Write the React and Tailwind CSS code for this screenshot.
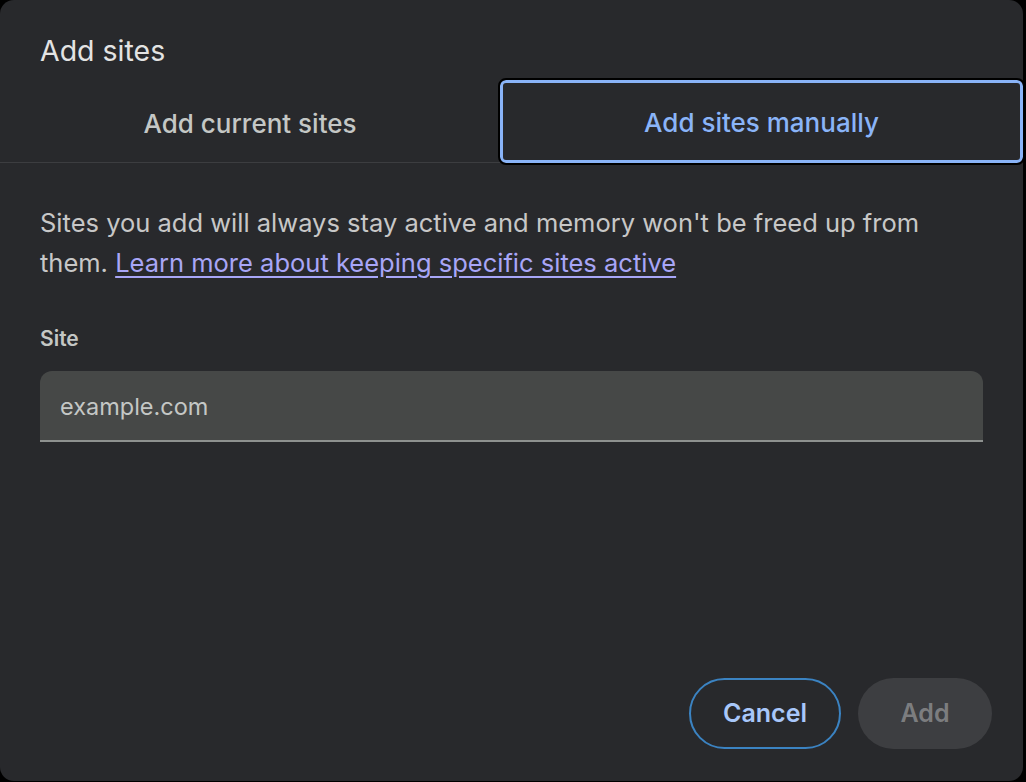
export default function App() {
  return (
    <div className="h-[782px] w-[1026px] overflow-hidden bg-black" style={{ fontFamily: "Inter, Roboto, 'Noto Sans', sans-serif" }}>
      <div className="flex h-[781px] w-[1023px] flex-col rounded-[14px] bg-[#28292c]">
        <h1 className="px-10 pt-[33px] text-[28.5px] leading-[36px] text-[#e3e3e3]">Add sites</h1>

        <div className="mt-[11px] flex h-[83px] border-b border-[#3c3d40]">
          <button className="flex-1 pt-[4px] text-[26px] font-medium text-[#c4c7c5]">Add current sites</button>
          <button className="-mb-px w-[523px] rounded-[6px] border-[3px] border-[#8ab4f8] pt-[2px] text-[26px] font-medium text-[#8ab4f8] outline outline-2 outline-black">
            Add sites manually
          </button>
        </div>

        <p className="px-10 pt-[40px] text-[25.5px] leading-[40px] text-[#c7c7c7]">
          Sites you add will always stay active and memory won't be freed up from them.{" "}
          <a href="#" className="text-[#a8a6f7] underline underline-offset-4">Learn more about keeping specific sites active</a>
        </p>

        <label className="px-10 pt-[40px] text-[21px] font-semibold text-[#c4c7c5]">Site</label>
        <div className="mx-10 mt-[16px] flex h-[71px] items-center rounded-t-[12px] border-b-2 border-[#8e918f] bg-[#464847] px-5">
          <span className="pt-[3px] text-[23.5px] text-[#c4c7c5]">example.com</span>
        </div>

        <div className="mt-auto flex justify-end gap-[17px] pb-[32px] pr-[31px]">
          <button className="h-[71px] w-[152px] rounded-full border-2 border-[#3b83c2] text-[25px] font-semibold text-[#a8c7fa]">Cancel</button>
          <button className="h-[71px] w-[134px] rounded-full bg-[#3d3e41] text-[25px] font-semibold text-[#7c7d7f]">Add</button>
        </div>
      </div>
    </div>
  );
}
